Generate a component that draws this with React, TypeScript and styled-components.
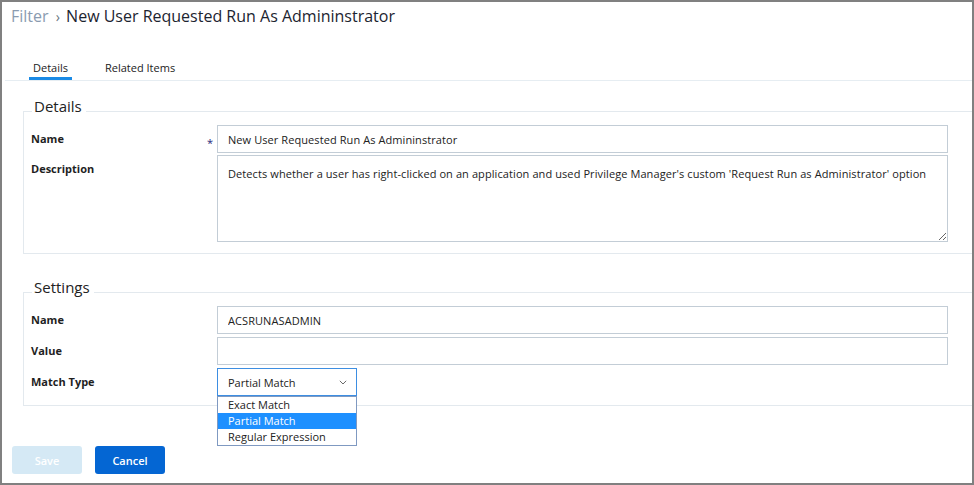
import React from 'react';
import styled, { createGlobalStyle } from 'styled-components';

const GlobalStyle = createGlobalStyle`
  html, body { margin: 0; padding: 0; background: #fff; }
  body { font-family: 'Open Sans', 'Liberation Sans', sans-serif; }
  * { box-sizing: border-box; }
`;

const Frame = styled.div`
  width: 974px;
  height: 485px;
  border: 2px solid #808080;
  background: #fff;
  overflow: hidden;
  display: flex;
  flex-direction: column;
  font-family: 'Open Sans', 'Liberation Sans', sans-serif;
  color: #222;
`;

const Header = styled.h1`
  margin: 0;
  padding: 2px 0 0 9px;
  height: 26px;
  font-size: 16px;
  line-height: 24px;
  font-weight: 400;
  color: #1c2430;
  white-space: nowrap;
`;

const Crumb = styled.span`
  color: #8a9bb0;
`;

const CrumbSep = styled.span`
  color: #6b7580;
  font-size: 14px;
  line-height: 0;
  margin: 0 2px 0 3px;
`;

const TabBar = styled.div`
  display: flex;
  gap: 29px;
  margin: 32px 0 0 3px;
  padding-left: 24px;
  border-bottom: 1px solid #e6edf2;
`;

const Tab = styled.div<{ $active?: boolean }>`
  font-size: 11px;
  line-height: 16px;
  padding: 0 4px 1px;
  color: #222;
  border-bottom: 3px solid ${(p) => (p.$active ? '#1a8ae5' : 'transparent')};
`;

const Section = styled.section<{ $top: number }>`
  margin: ${(p) => p.$top}px 0 0 21px;
`;

const LegendRow = styled.div`
  margin-bottom: -5px;
  padding-left: 9px;
  font-size: 15px;
  line-height: 20px;
`;

const LegendText = styled.span`
  display: inline-block;
  background: #fff;
  padding: 0 4px 0 2px;
  color: #222;
`;

const Box = styled.div<{ $padBottom: number; $gap: number }>`
  border: 1px solid #e3e9ee;
  border-right: none;
  padding: 13px 24px ${(p) => p.$padBottom}px 7px;
  display: grid;
  grid-template-columns: 172px 14px 1fr;
  row-gap: ${(p) => p.$gap}px;
`;

const Label = styled.div`
  font-size: 11px;
  font-weight: 700;
  line-height: 16px;
  padding-top: 6px;
  color: #1f1f1f;
`;

const Marker = styled.div`
  font-size: 11px;
  line-height: 16px;
  padding-top: 10px;
  text-align: center;
  color: #27277a;
`;

const TextInput = styled.input`
  display: block;
  width: 100%;
  height: 28px;
  margin: 0;
  border: 1px solid #c3cdd6;
  border-radius: 0;
  padding: 0 10px;
  font-family: 'Open Sans', 'Liberation Sans', sans-serif;
  font-size: 11px;
  letter-spacing: 0.08px;
  color: #222;
  background: #fff;
  outline: none;
`;

const TextArea = styled.textarea`
  display: block;
  width: 100%;
  height: 87px;
  margin: 0;
  border: 1px solid #c3cdd6;
  border-radius: 0;
  padding: 10px 10px 8px;
  font-family: 'Open Sans', 'Liberation Sans', sans-serif;
  font-size: 11px;
  letter-spacing: 0.09px;
  line-height: 16px;
  color: #222;
  background: #fff;
  outline: none;
  resize: both;
`;

const SelectWrap = styled.div`
  position: relative;
  width: 140px;
`;

const SelectBox = styled.div`
  height: 28px;
  border: 1px solid #3d8ee2;
  display: flex;
  align-items: center;
  justify-content: space-between;
  padding: 0 9px 0 10px;
  font-size: 11px;
  color: #222;
  background: #fff;
`;

const OptionList = styled.ul`
  position: absolute;
  top: 100%;
  left: 0;
  width: 100%;
  margin: 0;
  padding: 0;
  list-style: none;
  border: 1px solid #7f99c1;
  background: #fff;
  z-index: 2;
`;

const OptionItem = styled.li<{ $selected?: boolean }>`
  height: 16px;
  line-height: 16px;
  padding: 0 10px;
  font-size: 11px;
  color: ${(p) => (p.$selected ? '#fff' : '#222')};
  background: ${(p) => (p.$selected ? '#1e90ff' : '#fff')};
`;

const Actions = styled.div`
  display: flex;
  gap: 13px;
  margin-top: 40px;
  padding-left: 10px;
`;

const Button = styled.button<{ $primary?: boolean }>`
  width: 70px;
  height: 28px;
  border: 0;
  border-radius: 3px;
  font-family: 'Open Sans', 'Liberation Sans', sans-serif;
  font-size: 11px;
  font-weight: 600;
  color: #fff;
  background: ${(p) => (p.$primary ? '#0466d3' : '#d5e9f5')};
  cursor: pointer;
`;

const Chevron = () => (
  <svg width="8" height="5" viewBox="0 0 8 5">
    <polyline points="0.8,0.8 4,4 7.2,0.8" fill="none" stroke="#6a6a6a" strokeWidth="1" />
  </svg>
);

export default function App() {
  const description =
    "Detects whether a user has right-clicked on an application and used Privilege Manager's custom 'Request Run as Administrator' option";
  return (
    <>
      <GlobalStyle />
      <Frame>
        <Header>
          <Crumb>Filter</Crumb> <CrumbSep>›</CrumbSep> New User Requested Run As Admininstrator
        </Header>
        <TabBar>
          <Tab $active>Details</Tab>
          <Tab>Related Items</Tab>
        </TabBar>

        <Section $top={15}>
          <LegendRow>
            <LegendText>Details</LegendText>
          </LegendRow>
          <Box $padBottom={11} $gap={2}>
            <Label>Name</Label>
            <Marker>*</Marker>
            <TextInput defaultValue="New User Requested Run As Admininstrator" />
            <Label>Description</Label>
            <Marker />
            <TextArea defaultValue={description} />
          </Box>
        </Section>

        <Section $top={23}>
          <LegendRow>
            <LegendText>Settings</LegendText>
          </LegendRow>
          <Box $padBottom={9} $gap={3}>
            <Label>Name</Label>
            <Marker />
            <TextInput defaultValue="ACSRUNASADMIN" />
            <Label>Value</Label>
            <Marker />
            <TextInput defaultValue="" />
            <Label>Match Type</Label>
            <Marker />
            <SelectWrap>
              <SelectBox>
                <span>Partial Match</span>
                <Chevron />
              </SelectBox>
              <OptionList>
                <OptionItem>Exact Match</OptionItem>
                <OptionItem $selected>Partial Match</OptionItem>
                <OptionItem>Regular Expression</OptionItem>
              </OptionList>
            </SelectWrap>
          </Box>
        </Section>

        <Actions>
          <Button>Save</Button>
          <Button $primary>Cancel</Button>
        </Actions>
      </Frame>
    </>
  );
}
